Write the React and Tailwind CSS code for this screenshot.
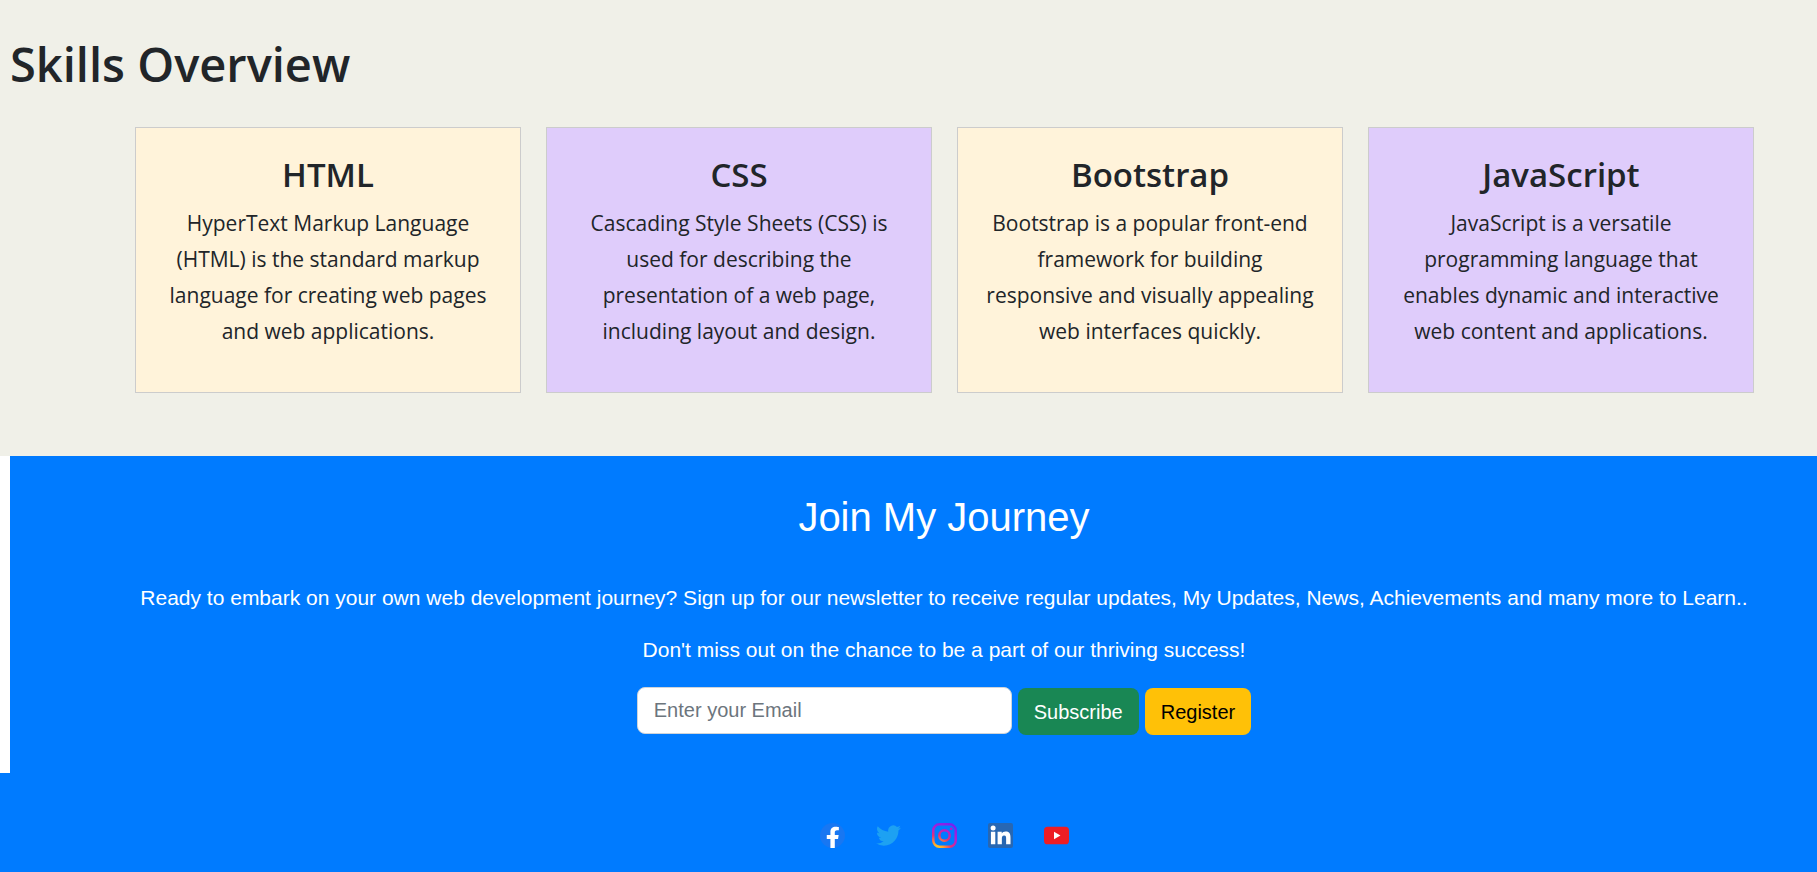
import { useId } from "react";

const skills = [
  {
    name: "HTML",
    text: "HyperText Markup Language (HTML) is the standard markup language for creating web pages and web applications.",
    tone: "bg-[#fff3da]",
  },
  {
    name: "CSS",
    text: "Cascading Style Sheets (CSS) is used for describing the presentation of a web page, including layout and design.",
    tone: "bg-[#dfccfb]",
  },
  {
    name: "Bootstrap",
    text: "Bootstrap is a popular front-end framework for building responsive and visually appealing web interfaces quickly.",
    tone: "bg-[#fff3da]",
  },
  {
    name: "JavaScript",
    text: "JavaScript is a versatile programming language that enables dynamic and interactive web content and applications.",
    tone: "bg-[#dfccfb]",
  },
];

function FacebookIcon() {
  return (
    <svg viewBox="0 0 24 24" className="size-[25px]" aria-hidden="true">
      <circle cx="12" cy="12" r="12" fill="#1877f2" />
      <path
        d="M17.300 15.400l.6-3.900h-3.700V9c0-1.100.5-2.100 2.200-2.100h1.700V3.800s-1.500-.3-3-.3c-3.100 0-5.100 1.800-5.100 5.100v2.900H6.500v3.900H10V24h4.200v-8.600z"
        fill="#fff"
      />
    </svg>
  );
}

function TwitterIcon() {
  return (
    <svg viewBox="0 0 24 24" className="size-[25px]" aria-hidden="true">
      <path
        fill="#1da1f2"
        d="M23.95 4.57a10 10 0 0 1-2.82.77 4.96 4.96 0 0 0 2.16-2.72c-.95.55-2 .95-3.13 1.18a4.92 4.92 0 0 0-8.38 4.48C7.69 8.1 4.07 6.13 1.64 3.16a4.92 4.92 0 0 0 1.52 6.57 4.9 4.9 0 0 1-2.23-.61v.06a4.92 4.92 0 0 0 3.95 4.83 5 5 0 0 1-2.21.08 4.94 4.94 0 0 0 4.6 3.42A9.87 9.87 0 0 1 0 19.54a13.99 13.99 0 0 0 7.55 2.21c9.05 0 14-7.5 14-13.98 0-.21 0-.42-.02-.63a9.94 9.94 0 0 0 2.42-2.57z"
      />
    </svg>
  );
}

function InstagramIcon() {
  const id = useId();
  return (
    <svg viewBox="0 0 24 24" className="size-[25px]" aria-hidden="true">
      <defs>
        <radialGradient id={id} gradientUnits="userSpaceOnUse" cx="5" cy="25" r="27">
          <stop offset="0" stopColor="#ffd521" />
          <stop offset="0.22" stopColor="#ffa02b" />
          <stop offset="0.5" stopColor="#e0307c" />
          <stop offset="0.75" stopColor="#b01fd0" />
          <stop offset="1" stopColor="#7a20f0" />
        </radialGradient>
      </defs>
      <g fill="none" stroke={`url(#${id})`} strokeWidth="2.4">
        <rect x="1.2" y="1.2" width="21.6" height="21.6" rx="6" />
        <circle cx="12" cy="12" r="5" />
      </g>
      <circle cx="18.4" cy="5.6" r="1.4" fill="#b01fd0" />
    </svg>
  );
}

function LinkedinIcon() {
  return (
    <svg viewBox="0 0 24 24" className="size-[25px]" aria-hidden="true">
      <rect width="24" height="24" rx="2" fill="#2867b2" />
      <circle cx="4.900" cy="4.700" r="2.400" fill="#fff" />
      <path
        fill="#fff"
        d="M2.800 8.500H7v12H2.800zM9.200 8.500h4v1.600c.6-1 1.900-1.900 3.800-1.900 3.900 0 4.600 2.500 4.600 5.900v6.400h-4.200v-5.600c0-1.300 0-3-1.900-3s-2.200 1.400-2.200 2.900v5.700H9.200z"
      />
    </svg>
  );
}

function YoutubeIcon() {
  return (
    <svg viewBox="0 0 24 24" className="size-[25px]" aria-hidden="true">
      <rect y="3.500" width="24" height="17" rx="3.500" fill="#ed1d24" />
      <path d="M9.600 8.300v7.400l6.200-3.700z" fill="#fff" />
    </svg>
  );
}

const socials = [
  { label: "Facebook", Icon: FacebookIcon },
  { label: "Twitter", Icon: TwitterIcon },
  { label: "Instagram", Icon: InstagramIcon },
  { label: "LinkedIn", Icon: LinkedinIcon },
  { label: "YouTube", Icon: YoutubeIcon },
];

export default function App() {
  return (
    <div className="min-h-screen bg-white font-['Open_Sans',sans-serif] text-[#212529]">
      <section className="bg-[#f0f0e8] pt-8 pb-[63px]">
        <h2 className="px-2.5 text-[47px] leading-16 font-semibold">Skills Overview</h2>
        <div className="mt-[31px] grid grid-cols-4 gap-[25px] pr-[63px] pl-[135px]">
          {skills.map((skill) => (
            <article
              key={skill.name}
              className={`border border-[#ccc] px-6 pt-[27px] pb-[43px] text-center ${skill.tone}`}
            >
              <h3 className="text-[33px] leading-10 font-semibold">{skill.name}</h3>
              <p className="mt-2.5 text-[21px] leading-9">{skill.text}</p>
            </article>
          ))}
        </div>
      </section>

      <section className="ml-2.5 bg-[#007bff] pt-[31px] pr-[63px] pb-[38px] pl-[124px] text-center font-['Liberation_Sans',sans-serif] text-white">
        <h2 className="text-[40px] leading-15">Join My Journey</h2>
        <p className="mt-[35px] text-[21px] leading-8 xl:whitespace-nowrap">
          Ready to embark on your own web development journey? Sign up for our newsletter to receive
          regular updates, My Updates, News, Achievements and many more to Learn..
        </p>
        <p className="mt-5 text-[21px] leading-8">
          Don't miss out on the chance to be a part of our thriving success!
        </p>
        <form className="mt-[21px] flex h-12 items-end justify-center gap-1.5 text-xl">
          <input
            type="email"
            aria-label="Email address"
            placeholder="Enter your Email"
            className="h-[47px] w-[375px] self-start rounded-lg border border-[#ced4da] bg-white px-4 placeholder:text-[#6c757d]"
          />
          <button type="button" className="h-[47px] rounded-lg bg-[#198754] px-4">
            Subscribe
          </button>
          <button type="button" className="h-[47px] rounded-lg bg-[#ffc107] px-4 text-black">
            Register
          </button>
        </form>
      </section>

      <footer className="flex justify-center gap-[31px] bg-[#007bff] pt-12.5 pr-[63px] pb-6 pl-[134px]">
        {socials.map(({ label, Icon }) => (
          <a key={label} href="#" aria-label={label}>
            <Icon />
          </a>
        ))}
      </footer>
    </div>
  );
}
